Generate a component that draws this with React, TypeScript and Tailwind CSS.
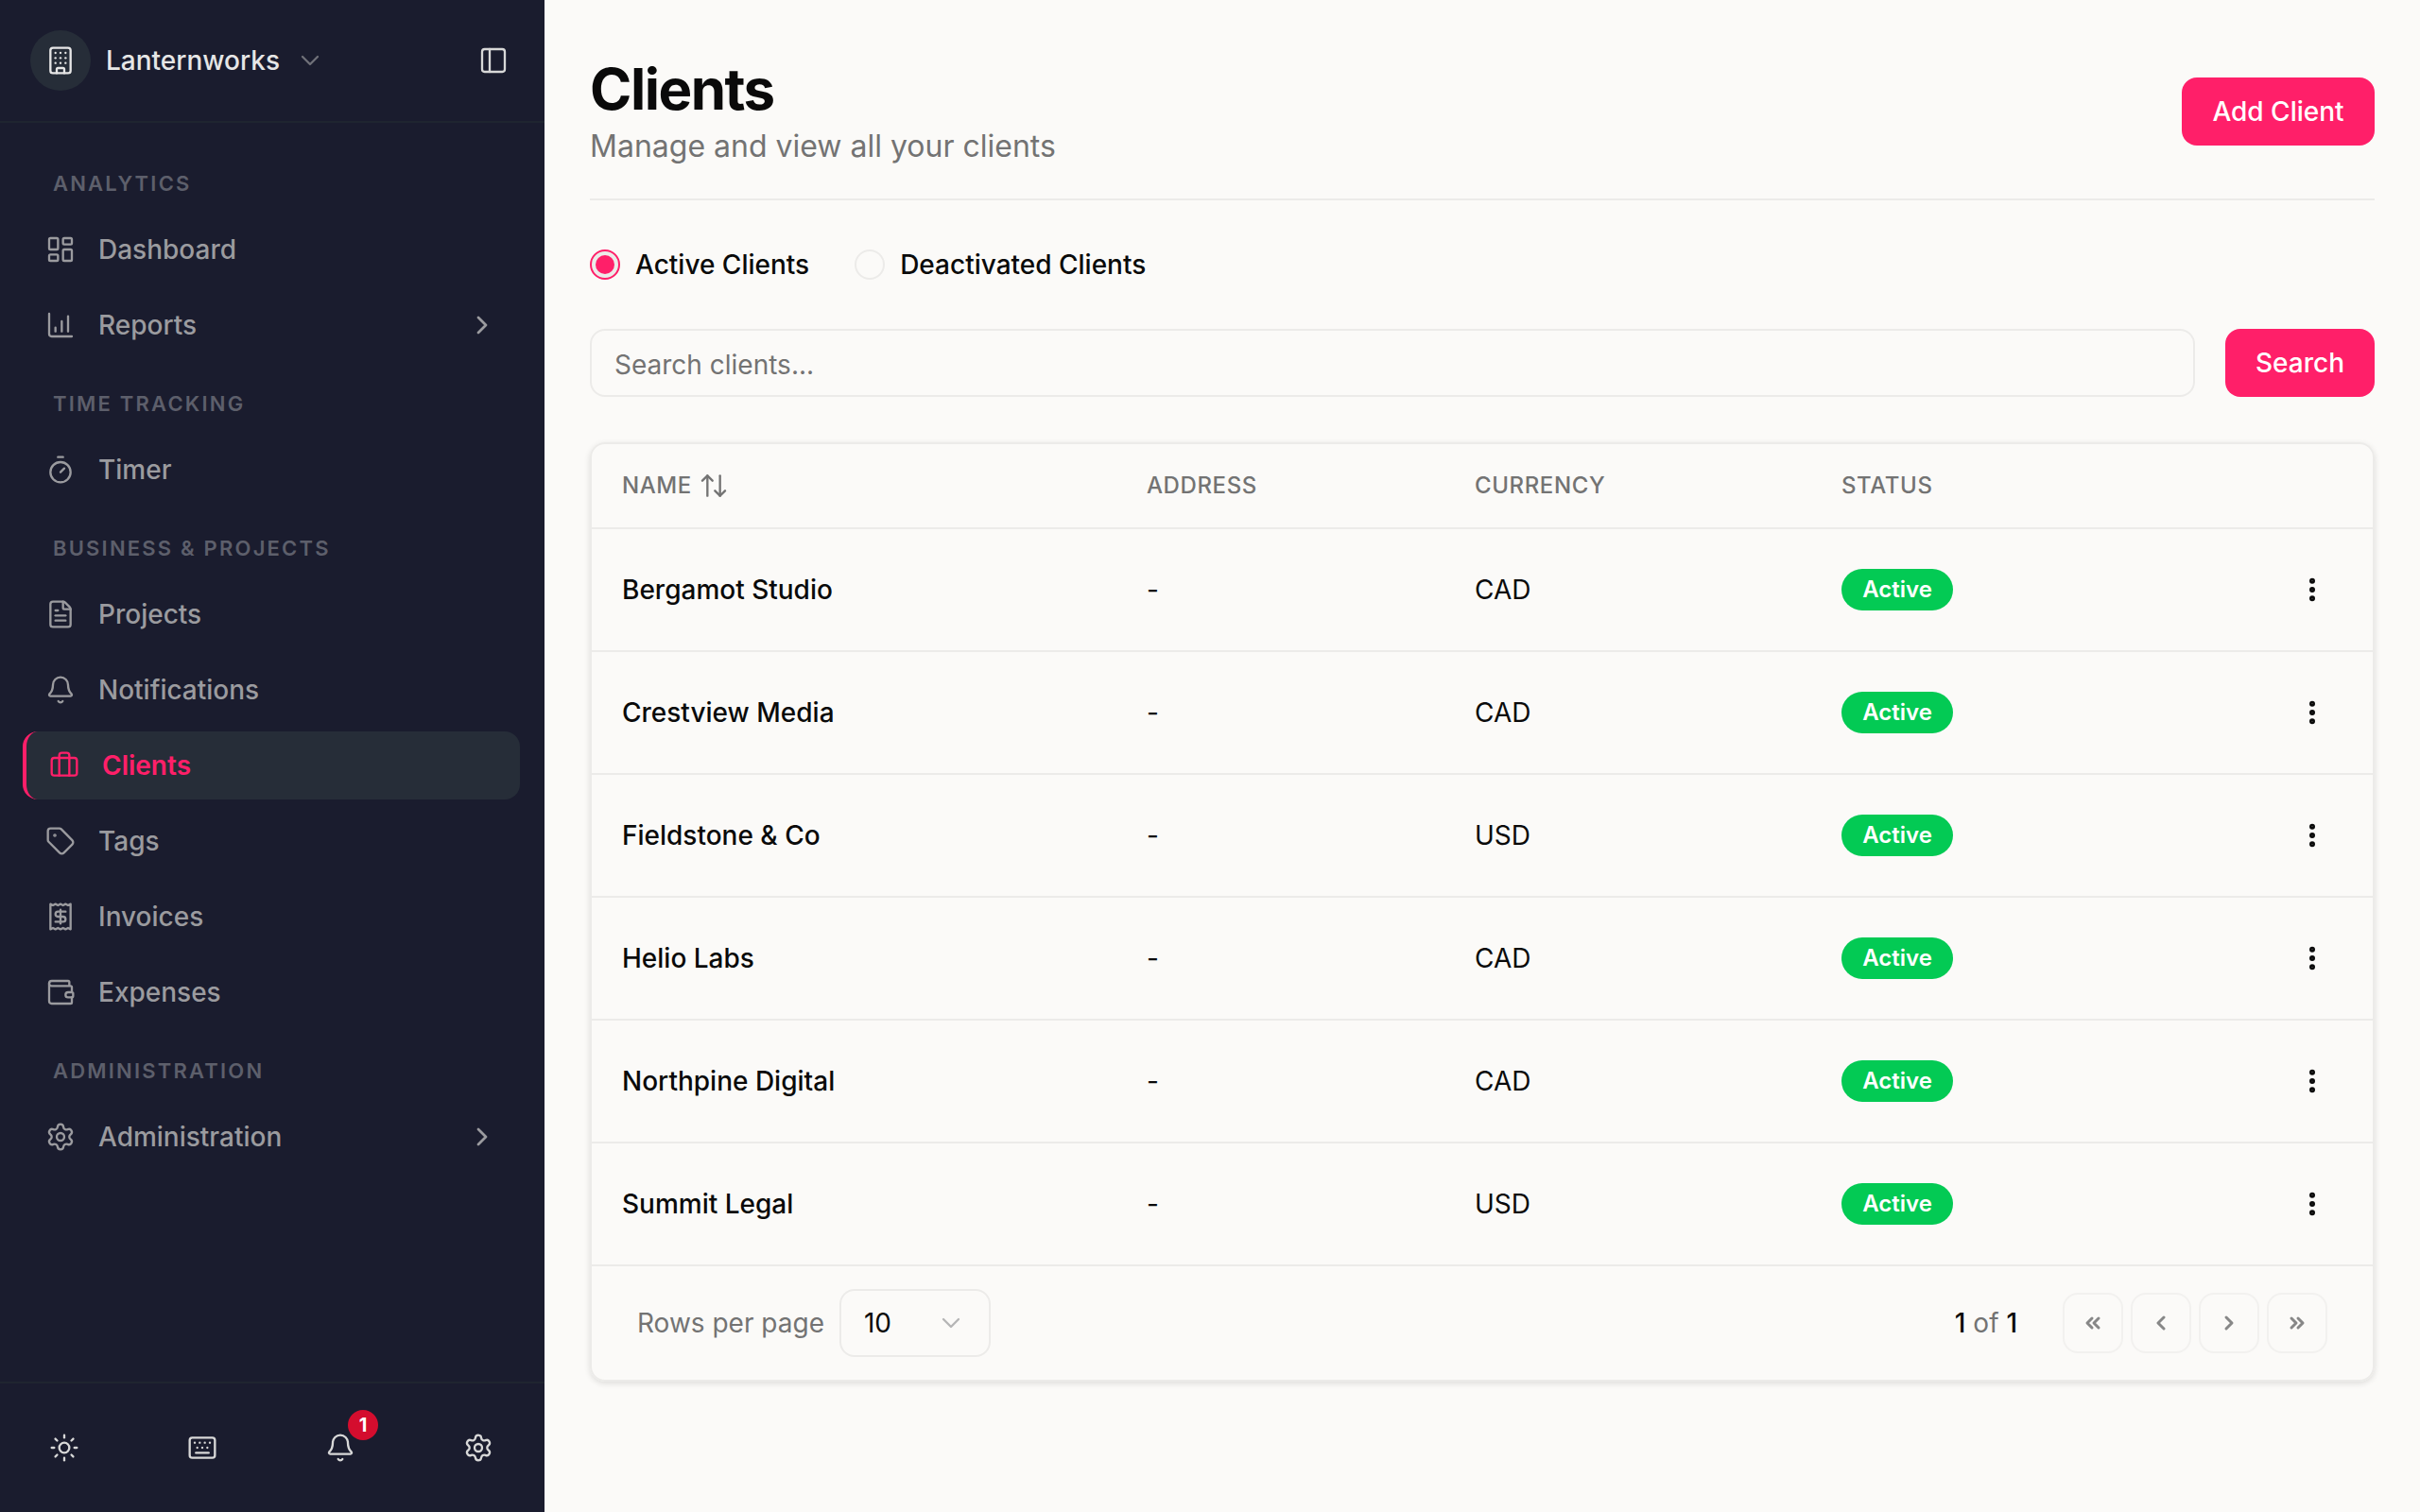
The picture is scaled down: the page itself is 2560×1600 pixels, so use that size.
import React from 'react';
import {
  Bell,
  Briefcase,
  Building,
  ChartColumnIncreasing,
  ChevronDown,
  ChevronLeft,
  ChevronRight,
  ChevronsLeft,
  ChevronsRight,
  ArrowUpDown,
  EllipsisVertical,
  FileText,
  Keyboard,
  LayoutDashboard,
  PanelLeft,
  Receipt,
  Settings,
  Sun,
  Tag,
  Timer,
  Wallet,
} from 'lucide-react';

type NavItemProps = {
  icon: React.ElementType;
  label: string;
  active?: boolean;
  expandable?: boolean;
};

const NavItem: React.FC<NavItemProps> = ({ icon: Icon, label, active, expandable }) => (
  <div
    className={`flex h-18 items-center rounded-2xl ${
      active ? 'border-l-4 border-[#ff1f69] bg-[#262d38] pl-6 pr-6 text-[#ff1f69]' : 'px-6 text-[#9b9b9f]'
    }`}
  >
    <Icon size={32} strokeWidth={1.75} className="shrink-0" />
    <span className={`ml-6 text-[28px] ${active ? 'font-semibold' : 'font-medium'}`}>{label}</span>
    {expandable && <ChevronRight size={32} strokeWidth={2} className="ml-auto" />}
  </div>
);

const NavSection: React.FC<{ title: string; children: React.ReactNode }> = ({ title, children }) => (
  <div className="mb-[31px]">
    <div className="mb-[18px] h-8 pl-8 text-[22px] leading-8 font-semibold tracking-[0.1em] text-[#5d5f6b] uppercase">{title}</div>
    <div className="flex flex-col gap-2">{children}</div>
  </div>
);

const Sidebar = () => (
  <aside className="flex h-[1600px] w-[576px] shrink-0 flex-col bg-[#1a1c2e]">
    <div className="flex h-[130px] shrink-0 items-center border-b-2 border-[#1f2530] pl-8 pr-[38px]">
      <div className="flex size-16 items-center justify-center rounded-full bg-[#262d38] text-[#e6e6e6]">
        <Building size={32} strokeWidth={1.75} />
      </div>
      <span className="ml-4 text-[28px] font-medium text-[#e6e6e6]">Lanternworks</span>
      <ChevronDown size={32} strokeWidth={1.75} className="ml-4 text-[#6f7078]" />
      <PanelLeft size={32} strokeWidth={1.75} className="ml-auto text-[#d8d8d8]" />
    </div>

    <nav className="flex-1 pl-6 pr-[26px] pt-12">
      <NavSection title="Analytics">
        <NavItem icon={LayoutDashboard} label="Dashboard" />
        <NavItem icon={ChartColumnIncreasing} label="Reports" expandable />
      </NavSection>
      <NavSection title="Time Tracking">
        <NavItem icon={Timer} label="Timer" />
      </NavSection>
      <NavSection title="Business & Projects">
        <NavItem icon={FileText} label="Projects" />
        <NavItem icon={Bell} label="Notifications" />
        <NavItem icon={Briefcase} label="Clients" active />
        <NavItem icon={Tag} label="Tags" />
        <NavItem icon={Receipt} label="Invoices" />
        <NavItem icon={Wallet} label="Expenses" />
      </NavSection>
      <NavSection title="Administration">
        <NavItem icon={Settings} label="Administration" expandable />
      </NavSection>
    </nav>

    <div className="flex h-[138px] shrink-0 items-center justify-between border-t-2 border-[#1f2530] pl-9 pr-[38px] text-[#d8d8d8]">
      <div className="flex size-16 items-center justify-center">
        <Sun size={32} strokeWidth={1.75} />
      </div>
      <div className="flex size-16 items-center justify-center">
        <Keyboard size={32} strokeWidth={1.75} />
      </div>
      <div className="relative flex size-16 items-center justify-center">
        <Bell size={32} strokeWidth={1.75} />
        <span className="absolute left-[40px] top-[-8px] flex size-8 items-center justify-center rounded-full bg-[#d40d2e] text-[20px] font-bold text-white">
          1
        </span>
      </div>
      <div className="flex size-16 items-center justify-center">
        <Settings size={32} strokeWidth={1.75} />
      </div>
    </div>
  </aside>
);

const clients = [
  { name: 'Bergamot Studio', currency: 'CAD' },
  { name: 'Crestview Media', currency: 'CAD' },
  { name: 'Fieldstone & Co', currency: 'USD' },
  { name: 'Helio Labs', currency: 'CAD' },
  { name: 'Northpine Digital', currency: 'CAD' },
  { name: 'Summit Legal', currency: 'USD' },
];

const pageIcons = [ChevronsLeft, ChevronLeft, ChevronRight, ChevronsRight];

const ClientsTable = () => (
  <div className="mt-[48px] rounded-2xl border-2 border-[#ecebe9] shadow-[0_2px_6px_rgba(0,0,0,0.12)]">
    <div className="grid h-[90px] grid-cols-[555px_347px_388px_1fr] items-center border-b-2 border-[#ecebe9] text-[24px] font-medium tracking-[0.025em] text-[#737373] uppercase">
      <div className="flex items-center gap-[7px] pl-8">
        Name
        <ArrowUpDown size={32} strokeWidth={1.75} />
      </div>
      <div className="pl-8">Address</div>
      <div className="pl-8">Currency</div>
      <div className="pl-8">Status</div>
    </div>

    {clients.map((client) => (
      <div
        key={client.name}
        className="grid h-[130px] grid-cols-[555px_347px_388px_1fr] items-center border-b-2 border-[#ecebe9] text-[28px] text-[#0a0a0a]"
      >
        <div className="pl-8 font-medium">{client.name}</div>
        <div className="pl-8">-</div>
        <div className="pl-8">{client.currency}</div>
        <div className="flex items-center justify-between pl-8">
          <span className="flex h-11 w-[118px] items-center justify-center rounded-full bg-[#03ca54] text-[24px] font-semibold text-white">
            Active
          </span>
          <div className="mr-12 flex size-8 items-center justify-center">
            <EllipsisVertical size={32} strokeWidth={2.5} />
          </div>
        </div>
      </div>
    ))}

    <div className="flex h-[120px] items-center px-12">
      <span className="text-[28px] text-[#737373]">Rows per page</span>
      <div className="ml-4 flex h-18 w-40 items-center justify-between rounded-2xl border-2 border-[#ecebe9] pl-6 pr-[24px] text-[28px] text-[#0a0a0a]">
        10
        <ChevronDown size={32} strokeWidth={1.75} className="text-[#b5b5b5]" />
      </div>
      <div className="ml-auto text-[28px] text-[#737373]">
        <span className="font-medium text-[#0a0a0a]">1</span> of <span className="font-medium text-[#0a0a0a]">1</span>
      </div>
      <div className="ml-12 flex gap-2">
        {pageIcons.map((Icon, i) => (
          <div key={i} className="flex size-16 items-center justify-center rounded-2xl border-2 border-[#f2f1ef] text-[#878787]">
            <Icon size={24} strokeWidth={3} />
          </div>
        ))}
      </div>
    </div>
  </div>
);

export default function App() {
  return (
    <div className="flex h-[1600px] w-[2560px] overflow-hidden bg-[#fbfaf8] font-['Inter',sans-serif]">
      <Sidebar />
      <main className="flex-1 px-12">
        <div className="flex h-[212px] items-start justify-between border-b-2 border-[#ecebe9] pt-[58px]">
          <div>
            <h1 className="text-[60px] leading-[72px] font-bold tracking-tight text-[#0a0a0a]">Clients</h1>
            <p className="mt-px text-[32px] leading-[48px] text-[#737373]">Manage and view all your clients</p>
          </div>
          <button className="mt-6 flex h-18 w-[204px] items-center justify-center rounded-2xl bg-[#ff1f69] text-[28px] font-medium text-white">
            Add Client
          </button>
        </div>

        <div className="mt-[52px] flex h-8 items-center gap-12 text-[28px] font-medium text-[#0a0a0a]">
          <label className="flex items-center gap-4">
            <span className="flex size-8 items-center justify-center rounded-full border-2 border-[#ff1f69] bg-[#ecebe9]">
              <span className="size-5 rounded-full bg-[#ff1f69]" />
            </span>
            Active Clients
          </label>
          <label className="flex items-center gap-4">
            <span className="size-8 rounded-full border-2 border-[#ecebe9]" />
            Deactivated Clients
          </label>
        </div>

        <div className="mt-[52px] flex gap-8">
          <div className="flex h-18 flex-1 items-center rounded-2xl border-2 border-[#ecebe9] px-6 pt-1 text-[28px] text-[#737373]">
            Search clients...
          </div>
          <button className="flex h-18 w-[158px] items-center justify-center rounded-2xl bg-[#ff1f69] text-[28px] font-medium text-white">
            Search
          </button>
        </div>

        <ClientsTable />
      </main>
    </div>
  );
}
